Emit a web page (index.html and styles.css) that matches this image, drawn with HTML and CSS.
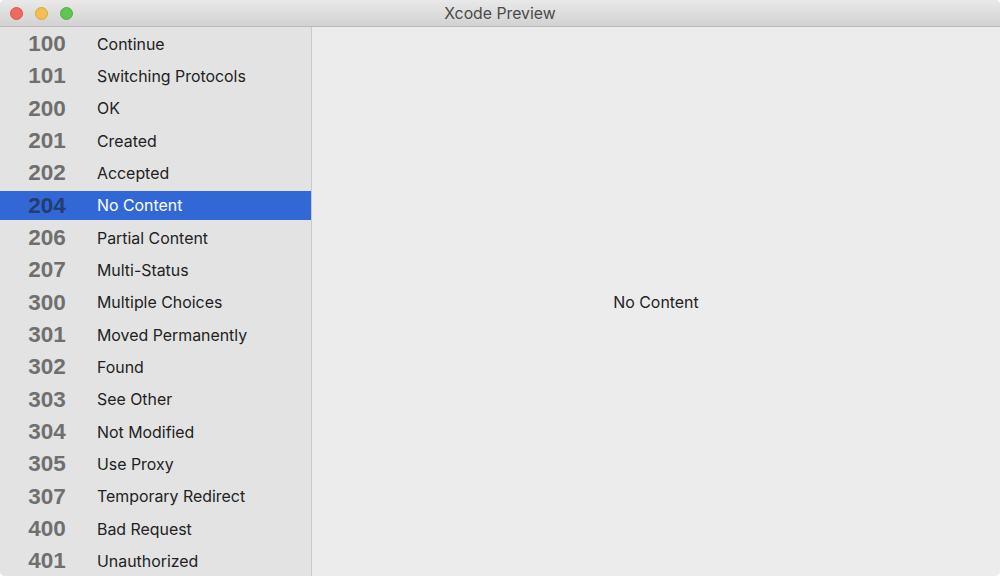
FILE: index.html
```html
<!DOCTYPE html>
<html>
<head>
<meta charset="utf-8">
<link rel="stylesheet" href="styles.css">
</head>
<body>
<div class="window">
  <div class="titlebar">
    <div class="lights">
      <span class="light red"></span>
      <span class="light yellow"></span>
      <span class="light green"></span>
    </div>
    <div class="title">Xcode Preview</div>
  </div>
  <div class="main">
    <div class="sidebar">
      <div class="row"><span class="code">100</span><span class="label">Continue</span></div>
      <div class="row"><span class="code">101</span><span class="label">Switching Protocols</span></div>
      <div class="row"><span class="code">200</span><span class="label">OK</span></div>
      <div class="row"><span class="code">201</span><span class="label">Created</span></div>
      <div class="row"><span class="code">202</span><span class="label">Accepted</span></div>
      <div class="row selected"><span class="code">204</span><span class="label">No Content</span></div>
      <div class="row"><span class="code">206</span><span class="label">Partial Content</span></div>
      <div class="row"><span class="code">207</span><span class="label">Multi-Status</span></div>
      <div class="row"><span class="code">300</span><span class="label">Multiple Choices</span></div>
      <div class="row"><span class="code">301</span><span class="label">Moved Permanently</span></div>
      <div class="row"><span class="code">302</span><span class="label">Found</span></div>
      <div class="row"><span class="code">303</span><span class="label">See Other</span></div>
      <div class="row"><span class="code">304</span><span class="label">Not Modified</span></div>
      <div class="row"><span class="code">305</span><span class="label">Use Proxy</span></div>
      <div class="row"><span class="code">307</span><span class="label">Temporary Redirect</span></div>
      <div class="row"><span class="code">400</span><span class="label">Bad Request</span></div>
      <div class="row"><span class="code">401</span><span class="label">Unauthorized</span></div>
    </div>
    <div class="detail">No Content</div>
  </div>
</div>
</body>
</html>
```
FILE: styles.css
```css
html, body {
  margin: 0;
  padding: 0;
  background: #ffffff;
}
body {
  width: 1000px;
  height: 576px;
  overflow: hidden;
  font-family: Inter, "Liberation Sans", sans-serif;
}
.window {
  width: 1000px;
  height: 576px;
  border-radius: 5px;
  overflow: hidden;
  display: flex;
  flex-direction: column;
  background: #ececec;
}
.titlebar {
  height: 26px;
  flex: none;
  border-bottom: 1px solid #b9b9b9;
  background: linear-gradient(#e9e9e9, #d2d2d2);
  display: flex;
  align-items: center;
  position: relative;
}
.lights {
  display: flex;
  gap: 12px;
  padding-left: 10px;
}
.light {
  width: 13px;
  height: 13px;
  border-radius: 50%;
  box-sizing: border-box;
}
.red { background: #ec6a5e; border: 1px solid #d9574c; }
.yellow { background: #f4bf4f; border: 1px solid #dca43a; }
.green { background: #61c554; border: 1px solid #4fae42; }
.title {
  position: absolute;
  left: 0;
  right: 0;
  text-align: center;
  font-size: 15.8px;
  color: #4a4a4a;
  pointer-events: none;
}
.main {
  flex: 1;
  display: flex;
  min-height: 0;
}
.sidebar {
  width: 311px;
  flex: none;
  background: #e3e3e3;
  border-right: 1px solid #c9c9c9;
  padding-top: 2.67px;
  overflow: hidden;
}
.row {
  height: 29px;
  margin-bottom: 3.33px;
  display: flex;
  align-items: center;
}
.code {
  width: 94px;
  text-align: center;
  font-family: "Liberation Sans", Arial, sans-serif;
  font-weight: bold;
  font-size: 22.5px;
  color: #6f6f6f;
}
.label {
  padding-left: 3px;
  font-size: 15.9px;
  color: #222222;
}
.selected {
  background: #3268d6;
}
.selected .code {
  color: #243c6e;
}
.selected .label {
  color: #ffffff;
}
.detail {
  flex: 1;
  display: flex;
  align-items: center;
  justify-content: center;
  font-size: 15.9px;
  color: #222222;
  padding-top: 1px;
}
```
